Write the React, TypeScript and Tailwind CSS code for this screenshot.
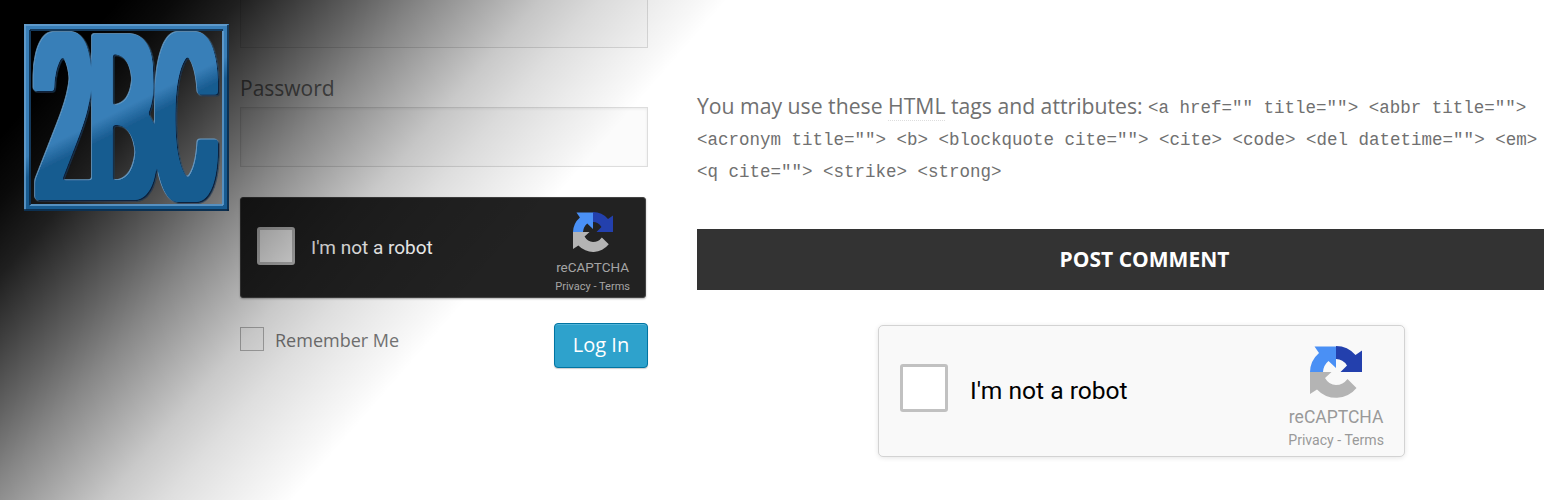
import React from "react";

function CaptchaMark({ className }: { className: string }) {
  return (
    <svg viewBox="0 0 52 52" className={className}>
      <path d="M0 26A26 26 0 0 1 9 7L4.500 0.500H26V22L18.500 15Q13.500 19 13 26Z" fill="#4a90f5" />
      <path d="M26 0A26 26 0 0 1 45.500 9L52 4.500V26H30.500L37 19.500Q33 13 26 13Z" fill="#2340ad" />
      <path d="M0 26H21.500L15 32Q19 39 26 39Q33 39 37.500 33L46.500 42A26 26 0 0 1 7 43.500L0 48Z" fill="#b4b4b4" />
    </svg>
  );
}

function Logo() {
  return (
    <svg width="205" height="187" viewBox="0 0 205 187" className="block">
      <defs>
        <linearGradient id="blue" gradientUnits="userSpaceOnUse" x1="55" y1="0" x2="140" y2="170">
          <stop offset="0" stopColor="#397fb8" />
          <stop offset="0.5" stopColor="#397fb8" />
          <stop offset="0.6" stopColor="#185b90" />
          <stop offset="1" stopColor="#185b90" />
        </linearGradient>
        <filter id="heavy" filterUnits="userSpaceOnUse" x="0" y="0" width="205" height="187">
          <feMorphology operator="dilate" radius="9 7" result="wide" />
          <feGaussianBlur in="wide" stdDeviation="1.6" />
          <feComponentTransfer>
            <feFuncA type="linear" slope="5" intercept="-2" />
          </feComponentTransfer>
        </filter>
        <filter id="bevel" filterUnits="userSpaceOnUse" x="0" y="0" width="205" height="187">
          <feDropShadow dx="1.5" dy="1.5" stdDeviation="0.6" floodColor="#08233c" />
          <feDropShadow dx="-0.8" dy="-0.8" stdDeviation="0.5" floodColor="#6ba3cf" />
        </filter>
        <mask id="letters" maskUnits="userSpaceOnUse" x="0" y="0" width="205" height="187">
          <g filter="url(#heavy)" fontFamily="Roboto" fontWeight="100" fontSize="214" fill="#fff">
            <text transform="translate(13 169) scale(0.45 1)">2</text>
            <text transform="translate(67 169) scale(0.48 1)">B</text>
            <text transform="translate(134 169) scale(0.41 1)">C</text>
          </g>
        </mask>
      </defs>
      <g filter="url(#bevel)">
        <rect width="205" height="187" fill="url(#blue)" mask="url(#letters)" />
      </g>
      <rect x="3.5" y="3.5" width="198" height="180" fill="none" stroke="url(#blue)" strokeWidth="7" />
      <path d="M0 1H204M1 0V186M6 181H199M199 7V181" stroke="#6ba3cf" strokeWidth="1.500" fill="none" />
      <path d="M0 186H205M204 1V187M6 6H199M6 6V181" stroke="#08233c" strokeWidth="1.500" fill="none" />
    </svg>
  );
}

export default function App() {
  return (
    <div className="relative flex h-[500px] w-[1544px] overflow-hidden bg-white font-['Open_Sans',sans-serif]">
      <div className="ml-[240px] w-[408px] shrink-0">
        <div className="h-12 border border-t-0 border-[#ddd] bg-[#fbfbfb]" />
        <div className="mt-[25px] h-[34px] text-[21px] leading-[30px] text-[#777]">Password</div>
        <div className="h-[60px] border border-[#ddd] bg-[#fbfbfb] shadow-[inset_0_1px_3px_rgba(0,0,0,0.07)]" />
        <div className="mt-[30px] flex h-[101px] w-[406px] items-center rounded-[3px] border border-[#444] bg-[#222] pl-4 font-[Roboto,sans-serif] shadow-[0_1px_2px_rgba(0,0,0,0.3)]">
          <div className="mb-[3px] size-[38px] rounded-[3px] border-[3px] border-[#c1c1c1] bg-white" />
          <div className="ml-4 mt-px text-[19px] text-white">I'm not a robot</div>
          <div className="ml-auto mr-[15px] flex flex-col items-center self-start pt-[14px] text-[#a5a5a5]">
            <CaptchaMark className="size-10" />
            <div className="mt-[5px] text-[13.500px] leading-5">reCAPTCHA</div>
            <div className="mt-px text-[11px] leading-[18px]">Privacy - Terms</div>
          </div>
        </div>
        <div className="mt-[25px] flex justify-between">
          <div className="flex h-[34px] items-center">
            <div className="mt-[-2px] size-6 border border-[#b4b4b4] bg-[#fbfbfb]" />
            <div className="ml-[11px] text-[18px] text-[#777]">Remember Me</div>
          </div>
          <div className="flex h-[45px] w-[94px] items-center justify-center rounded-[4px] border border-[#0074a2] bg-[#2ea2cc] pb-[2px] text-[20px] text-white shadow-[inset_0_1px_0_rgba(120,200,230,0.5),0_1px_1px_rgba(0,0,0,0.2)]">Log In</div>
        </div>
      </div>
      <div className="ml-[49px] w-[847px] shrink-0 pt-[90px] text-[#707070]">
        <div className="h-[139px] whitespace-nowrap text-[21.200px] leading-8">
          <div className="flex h-8 items-start">
            <span className="whitespace-pre">You may use these <span className="border-b border-dotted border-[#ddd]">HTML</span> tags and attributes: </span>
            <code className="mt-[2px] font-['Liberation_Mono',monospace] text-[17.500px]">{'<a href="" title=""> <abbr title="">'}</code>
          </div>
          <code className="mt-[2px] block font-['Liberation_Mono',monospace] text-[17.500px]">{'<acronym title=""> <b> <blockquote cite=""> <cite> <code> <del datetime=""> <em>'}</code>
          <code className="block font-['Liberation_Mono',monospace] text-[17.500px]">{'<q cite=""> <strike> <strong>'}</code>
        </div>
        <div className="flex h-[61px] items-center justify-center bg-[#333] pl-12 text-[21px] font-bold text-white">POST COMMENT</div>
        <div className="ml-[181px] mt-[35px] flex h-[132px] w-[527px] items-center rounded-[5px] border border-[#d3d3d3] bg-[#f9f9f9] pl-[21px] font-[Roboto,sans-serif] shadow-[0_1px_5px_rgba(0,0,0,0.1)]">
          <div className="mb-[6px] size-12 rounded-[3px] border-[3px] border-[#c1c1c1] bg-white" />
          <div className="ml-[22px] text-[24.600px] text-black">I'm not a robot</div>
          <div className="ml-auto mr-5 flex flex-col items-center self-start pt-5 text-[#999]">
            <CaptchaMark className="size-[52px]" />
            <div className="mt-[6px] text-[17.500px] leading-[26px]">reCAPTCHA</div>
            <div className="mt-[-1px] text-[14.100px] leading-[22px]">Privacy - Terms</div>
          </div>
        </div>
      </div>
      <div className="pointer-events-none absolute inset-y-0 left-0 w-[760px] bg-[linear-gradient(131deg,rgba(0,0,0,1)_90px,rgba(0,0,0,0.96)_132px,rgba(0,0,0,0.88)_181px,rgba(0,0,0,0.75)_226px,rgba(0,0,0,0.61)_272px,rgba(0,0,0,0.47)_317px,rgba(0,0,0,0.34)_362px,rgba(0,0,0,0.21)_408px,rgba(0,0,0,0.13)_453px,rgba(0,0,0,0.08)_491px,rgba(0,0,0,0.03)_528px,rgba(0,0,0,0)_549px)]" />
      <div className="absolute left-6 top-6"><Logo /></div>
    </div>
  );
}
